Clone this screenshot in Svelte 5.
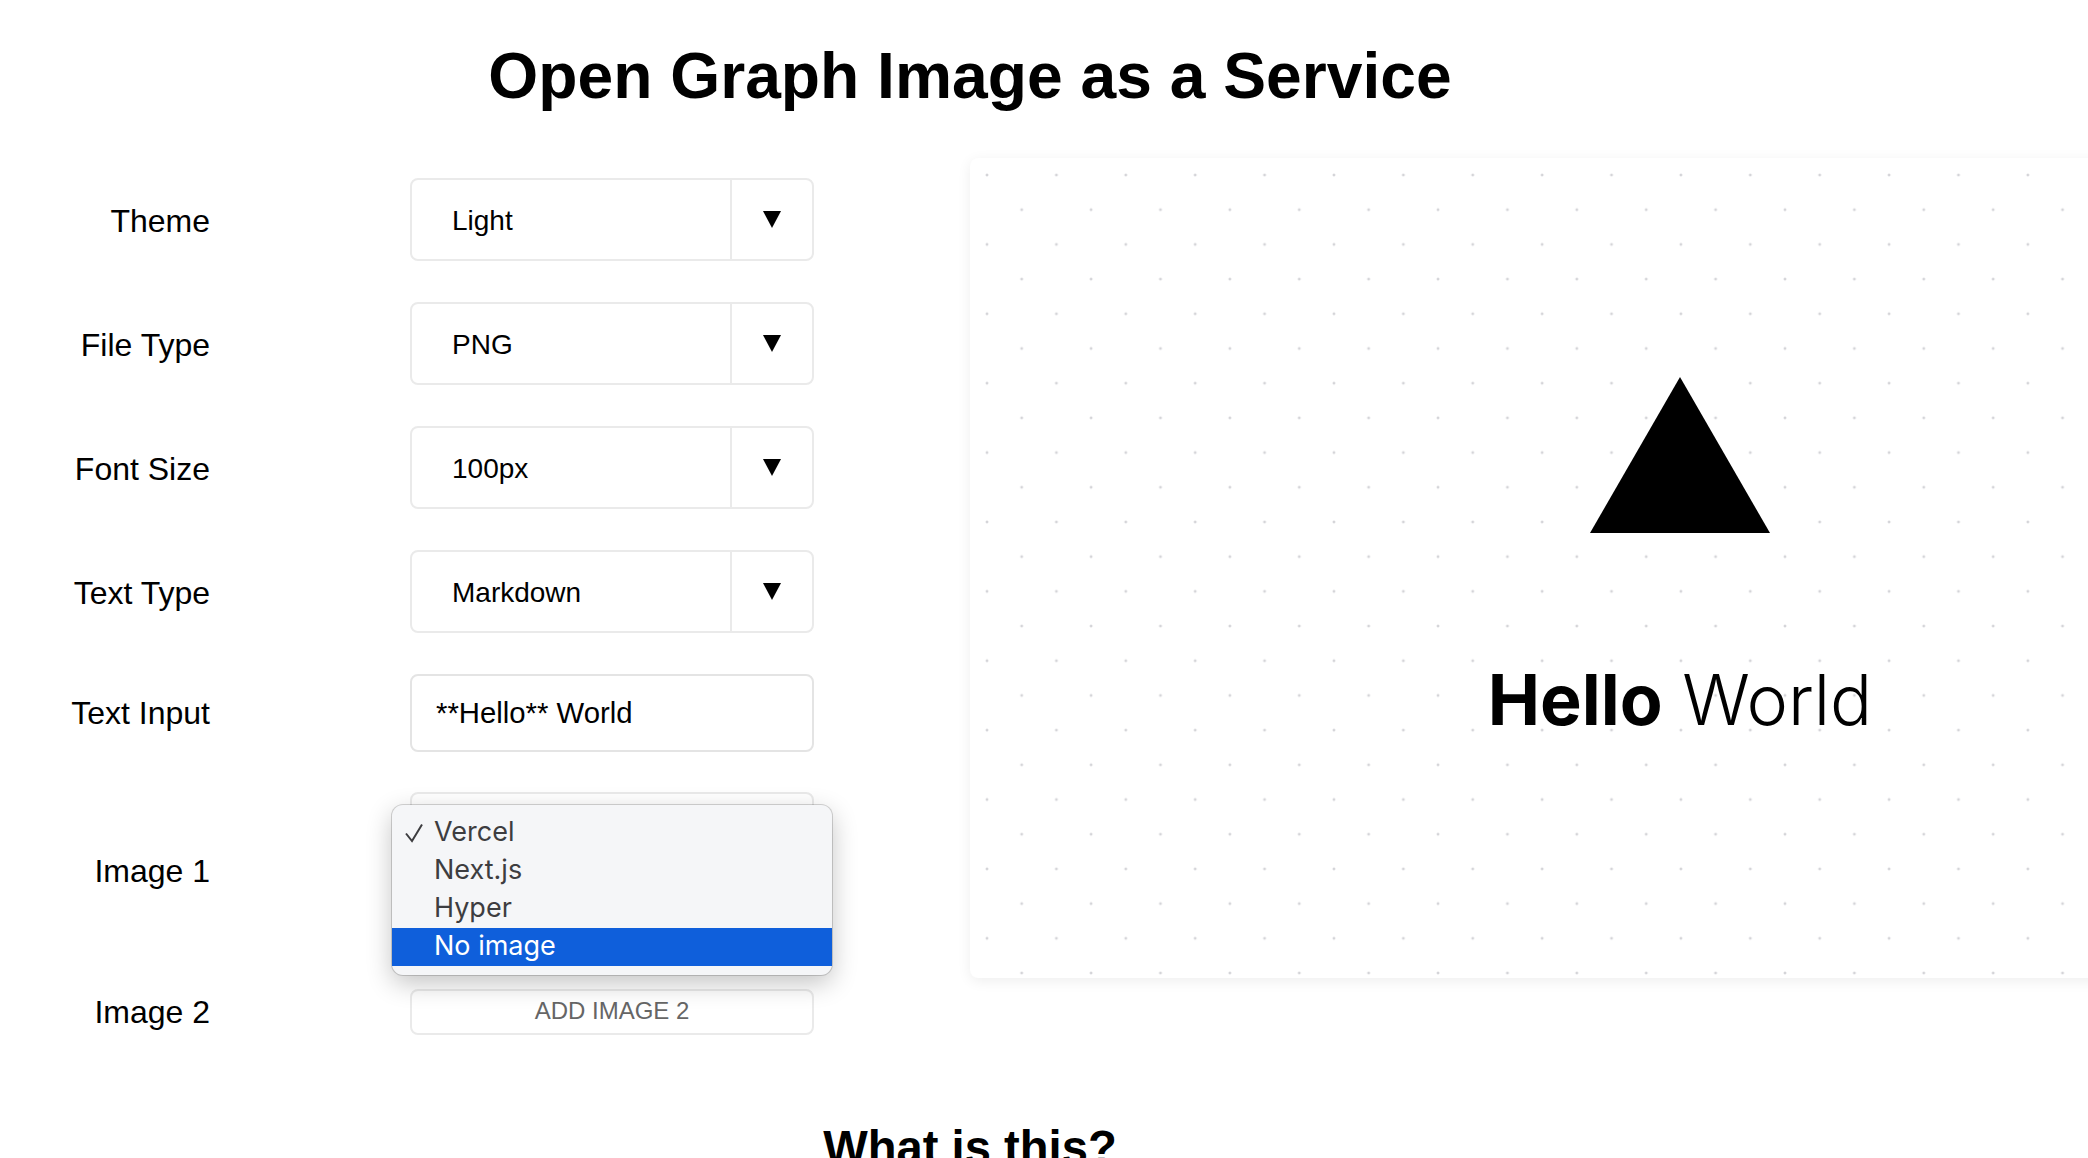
<script>
  const selects = [
    { label: 'Theme', value: 'Light' },
    { label: 'File Type', value: 'PNG' },
    { label: 'Font Size', value: '100px' },
    { label: 'Text Type', value: 'Markdown' }
  ];
  const options = ['Vercel', 'Next.js', 'Hyper', 'No image'];
  let image = $state('Vercel');
  let hovered = $state('No image');
</script>

<main class="page">
  <h1>Open Graph Image as a Service</h1>

  <div class="split">
    <div class="form">
      {#each selects as s}
        <div class="row select-row">
          <div class="label">{s.label}</div>
          <div class="field">
            <div class="select">
              <span class="value">{s.value}</span>
              <span class="arrow">
                <svg width="18" height="17" viewBox="0 0 18 17"><polygon points="0,0 18,0 9,17" fill="#000" /></svg>
              </span>
            </div>
          </div>
        </div>
      {/each}

      <div class="row input-row">
        <div class="label">Text Input</div>
        <div class="field">
          <input class="text" type="text" value="**Hello** World" aria-label="Text input" />
        </div>
      </div>

      <div class="row image-row">
        <div class="label">Image 1</div>
        <div class="field">
          <div class="select"></div>
          <div class="menu">
            {#each options as o}
              <button
                class="option"
                class:active={hovered === o}
                onmouseenter={() => (hovered = o)}
                onclick={() => (image = o)}
              >
                {#if image === o}
                  <svg class="check" width="20" height="20" viewBox="0 0 20 20"><path d="M2 10.5 L8 18 L18 1.5" fill="none" stroke="#3d3d40" stroke-width="2" /></svg>
                {/if}
                {o}
              </button>
            {/each}
          </div>
        </div>
      </div>

      <div class="row add-row">
        <div class="label">Image 2</div>
        <div class="field">
          <button class="add">ADD IMAGE 2</button>
        </div>
      </div>
    </div>

    <div class="preview">
      <svg class="logo" width="180" height="156" viewBox="0 0 180 156"><polygon points="90,0 180,156 0,156" fill="#000" /></svg>
      <div class="hello"><b>Hello</b> World</div>
    </div>
  </div>

  <h2>What is this?</h2>
</main>

<style>
  :global(body) {
    background: #fff;
    overflow: hidden;
  }

  .page {
    width: 1940px;
    height: 1158px;
    font-family: "Liberation Sans", Arial, sans-serif;
    color: #000;
  }

  h1 {
    margin: 0;
    padding-top: 40px;
    height: 158px;
    box-sizing: border-box;
    font-size: 64.2px;
    line-height: 72px;
    text-align: center;
  }

  .split {
    display: flex;
    height: 820px;
  }

  .form {
    flex: none;
    width: 970px;
    padding-top: 20px;
  }

  .preview {
    flex: none;
    width: 1420px;
    height: 820px;
    border-radius: 8px;
    box-sizing: border-box;
    padding-top: 219px;
    display: flex;
    flex-direction: column;
    align-items: center;
    background-color: #fff;
    background-image:
      radial-gradient(circle, #d4d4d8 1px, transparent 1.8px),
      radial-gradient(circle, #d4d4d8 1px, transparent 1.8px);
    background-size: 69.4px 69.4px;
    background-position: -17.7px -17.7px, 17px 17px;
    box-shadow: 0 3px 14px rgba(0, 0, 0, 0.07);
  }

  .logo {
    display: block;
  }

  .hello {
    margin-top: 125px;
    font-family: Inter, "Liberation Sans", sans-serif;
    font-size: 70px;
    line-height: 84px;
    font-weight: 300;
    color: #000;
    white-space: nowrap;
  }

  .hello b {
    font-weight: 700;
  }

  .row {
    display: flex;
    align-items: center;
    margin-bottom: 41px;
  }

  .input-row {
    margin-bottom: 40px;
  }

  .image-row {
    height: 158px;
    margin-bottom: 39px;
  }

  .label {
    flex: none;
    width: 210px;
    text-align: right;
    font-size: 32px;
    line-height: 40px;
  }

  .select-row .label {
    padding-top: 2px;
  }

  .field {
    flex: none;
    width: 404px;
    margin-left: 200px;
    position: relative;
  }

  .image-row .field {
    align-self: flex-start;
    height: 158px;
  }

  .select {
    display: flex;
    height: 83px;
    box-sizing: border-box;
    border: 2px solid #eaeaea;
    border-radius: 8px;
    background: #fff;
  }

  .value {
    flex: 1;
    padding-left: 40px;
    font-size: 28px;
    line-height: 81px;
    border-right: 2px solid #eaeaea;
  }

  .arrow {
    flex: none;
    width: 80px;
    display: flex;
    justify-content: center;
    padding-top: 31px;
    box-sizing: border-box;
  }

  .arrow svg {
    display: block;
  }

  .text {
    display: block;
    width: 100%;
    height: 78px;
    box-sizing: border-box;
    border: 2px solid #e4e4e4;
    border-radius: 8px;
    padding: 0 24px;
    font-family: inherit;
    font-size: 29.3px;
    color: #000;
    outline: none;
    background: #fff;
  }

  .menu {
    position: absolute;
    left: -18px;
    top: 13px;
    width: 440px;
    height: 170px;
    box-sizing: border-box;
    padding: 9px 0 8px;
    background: #f5f6f8;
    border-radius: 11px;
    box-shadow: 0 0 0 1px rgba(0, 0, 0, 0.16), 0 8px 26px rgba(0, 0, 0, 0.24);
    z-index: 2;
  }

  .option {
    display: block;
    position: relative;
    width: 100%;
    height: 38px;
    padding: 0 0 2px 42px;
    border: none;
    background: none;
    text-align: left;
    font-family: Inter, "Liberation Sans", sans-serif;
    font-size: 27px;
    line-height: 36px;
    color: #3d3d40;
  }

  .option.active {
    background: #0f5fdb;
    color: #fff;
  }

  .check {
    position: absolute;
    left: 12px;
    top: 9px;
  }

  .add {
    display: block;
    width: 100%;
    height: 46px;
    box-sizing: border-box;
    border: 2px solid #eaeaea;
    border-radius: 8px;
    background: #fff;
    font-family: inherit;
    font-size: 24px;
    color: #666;
    padding: 0 0 2px;
  }

  h2 {
    margin: 0;
    padding-top: 140px;
    font-size: 47.2px;
    line-height: 60px;
    text-align: center;
  }
</style>
